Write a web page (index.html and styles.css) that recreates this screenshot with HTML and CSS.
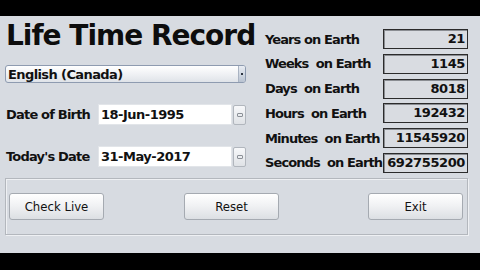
FILE: index.html
```html
<!DOCTYPE html>
<html>
<head>
<meta charset="utf-8">
<link rel="stylesheet" href="styles.css">
</head>
<body>
<div class="screen">
  <div class="bar top"></div>
  <div class="panel">
    <div class="upper">
      <div class="left">
        <h1 class="title">Life Time Record</h1>
        <div class="select"><span class="select-text">English (Canada)</span><span class="select-arrow"><i></i></span></div>
        <div class="date-row first">
          <span class="date-label">Date of Birth</span>
          <span class="date-input">18-Jun-1995</span>
          <span class="date-btn"><i></i></span>
        </div>
        <div class="date-row">
          <span class="date-label">Today's Date</span>
          <span class="date-input">31-May-2017</span>
          <span class="date-btn"><i></i></span>
        </div>
      </div>
      <div class="right">
        <span class="stat-label">Years on Earth</span><span class="stat-value">21</span>
        <span class="stat-label">Weeks&nbsp; on Earth</span><span class="stat-value">1145</span>
        <span class="stat-label">Days&nbsp; on Earth</span><span class="stat-value">8018</span>
        <span class="stat-label">Hours&nbsp; on Earth</span><span class="stat-value">192432</span>
        <span class="stat-label">Minutes&nbsp; on Earth</span><span class="stat-value">11545920</span>
        <span class="stat-label">Seconds&nbsp; on Earth</span><span class="stat-value">692755200</span>
      </div>
    </div>
    <div class="group">
      <button class="btn">Check Live</button>
      <button class="btn reset">Reset</button>
      <button class="btn exit">Exit</button>
    </div>
  </div>
  <div class="bar bottom"></div>
</div>
</body>
</html>
```
FILE: styles.css
```css
html, body {
  margin: 0;
  padding: 0;
  background: #000;
}
.screen {
  width: 480px;
  height: 270px;
  display: flex;
  flex-direction: column;
  overflow: hidden;
}
.bar.top { height: 16px; background: #000; }
.bar.bottom { height: 17px; background: #000; }
.panel {
  height: 237px;
  background: #d7dbe1;
  font-family: "DejaVu Sans", Verdana, sans-serif;
  color: #111;
  box-sizing: border-box;
  padding: 0 12px 0 5px;
}
.upper {
  display: flex;
}
.left {
  width: 260px;
  display: flex;
  flex-direction: column;
}
.title {
  margin: 6px 0 0 1px;
  font-size: 28px;
  line-height: 28px;
  font-weight: bold;
  letter-spacing: -1px;
  color: #0d0d0d;
}
.select {
  margin-top: 15px;
  width: 241px;
  height: 18px;
  box-sizing: border-box;
  border: 1px solid #8e9bb0;
  border-radius: 3px;
  background: linear-gradient(#ffffff, #eef0f3 55%, #dfe3e8);
  display: flex;
  align-items: center;
}
.select-text {
  flex: 1;
  padding-left: 2px;
  font-size: 13px;
  font-weight: bold;
  letter-spacing: -0.6px;
}
.select-arrow {
  width: 6px;
  height: 16px;
  border-left: 1px solid #a9b3c2;
  background: linear-gradient(#e8ecf2, #b9c3d1);
  border-radius: 0 2px 2px 0;
  display: flex;
  align-items: center;
  justify-content: center;
}
.select-arrow i {
  width: 2px;
  height: 2px;
  background: #2c3440;
}
.date-row {
  display: flex;
  align-items: center;
  margin-top: 21px;
  height: 21px;
}
.date-row.first { margin-top: 21px; }
.date-label {
  width: 92px;
  font-size: 13px;
  font-weight: bold;
  letter-spacing: -0.8px;
  padding-left: 1px;
}
.date-input {
  width: 134px;
  height: 21px;
  box-sizing: border-box;
  background: #fff;
  border: 1px solid #e2e5e9;
  font-size: 13px;
  font-weight: bold;
  letter-spacing: -0.5px;
  line-height: 19px;
  padding-left: 2px;
}
.date-btn {
  width: 13px;
  height: 20px;
  margin-left: 1px;
  box-sizing: border-box;
  border: 1px solid #b1b6bd;
  border-radius: 2px;
  background: linear-gradient(#f7f8fa, #dfe2e6);
  display: flex;
  align-items: center;
  justify-content: center;
}
.date-btn i {
  width: 4px;
  height: 2px;
  border: 1px solid #8b9097;
  border-radius: 1px;
}
.right {
  margin-left: 0;
  margin-top: 13px;
  display: grid;
  grid-template-columns: 118px 85px;
  grid-auto-rows: 20px;
  row-gap: 4.8px;
  align-items: center;
}
.stat-label {
  font-size: 13px;
  font-weight: bold;
  letter-spacing: -0.9px;
  white-space: nowrap;
}
.stat-value {
  height: 20px;
  box-sizing: border-box;
  border: 1px solid #2b2b2b;
  box-shadow: inset 1px 1px 0 #8a8d92;
  background: #d9dce1;
  text-align: right;
  padding-right: 2px;
  font-size: 13px;
  font-weight: bold;
  line-height: 18px;
  letter-spacing: -0.4px;
}
.group {
  margin-top: 5px;
  height: 57px;
  box-sizing: border-box;
  border: 1px solid #b3b7bd;
  box-shadow: inset 1px 1px 0 #eef0f3, 1px 1px 0 #eef0f3;
  display: flex;
  align-items: center;
  padding: 0 4px 0 3px;
  width: 463px;
}
.btn {
  width: 95px;
  height: 27px;
  box-sizing: border-box;
  border: 1px solid #a5aab1;
  border-radius: 3px;
  background: linear-gradient(#ffffff, #f1f2f4 45%, #dcdfe3);
  font-family: "DejaVu Sans Condensed", "DejaVu Sans", sans-serif;
  font-size: 13px;
  color: #111;
  padding: 0;
}
.btn.reset { margin-left: 80px; }
.btn.exit { margin-left: auto; }
```
